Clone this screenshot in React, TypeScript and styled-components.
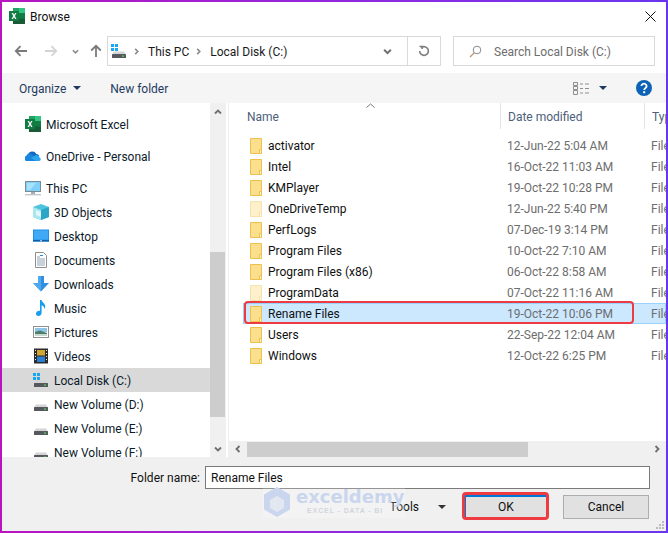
import styled, { createGlobalStyle } from "styled-components";

const GlobalStyle = createGlobalStyle`
  html, body {
    margin: 0;
    padding: 0;
    background: #fff;
  }
  * {
    box-sizing: border-box;
  }
`;

const Frame = styled.div`
  position: relative;
  width: 668px;
  height: 533px;
  padding: 2px;
  background: linear-gradient(90deg, #b815c0 0%, #8a2be2 60%, #6a35f0 100%);
  font-family: Roboto, "Open Sans", sans-serif;
  font-size: 12px;
  color: #101010;
  overflow: hidden;
`;

const Dialog = styled.div`
  width: 100%;
  height: 100%;
  display: flex;
  flex-direction: column;
  background: #fff;
  overflow: hidden;
`;

const Label = styled.span`
  padding-top: 2px;
`;

const TitleBar = styled.div`
  height: 34px;
  flex: none;
  display: flex;
  align-items: center;
  padding: 0 10px 6px 7px;
  gap: 5px;
`;

const TitleText = styled(Label)`
  flex: 1;
`;

const NavBar = styled.div`
  height: 37px;
  flex: none;
  display: flex;
  align-items: flex-start;
  padding-right: 11px;
`;

const NavButtons = styled.div`
  width: 105px;
  height: 30px;
  flex: none;
  display: flex;
  align-items: center;
  padding-left: 12px;
`;

const AddressBox = styled.div`
  width: 334px;
  height: 30px;
  flex: none;
  display: flex;
  align-items: center;
  border: 1px solid #d9d9d9;
  padding-left: 3px;
`;

const Crumb = styled(Label)`
  color: #1a1a1a;
`;

const CrumbSep = styled.span`
  margin: 0 8px 0 6px;
  display: flex;
`;

const AddressEnd = styled.div`
  width: 33px;
  height: 100%;
  flex: none;
  display: flex;
  align-items: center;
  justify-content: center;
  border-left: 1px solid #d9d9d9;
`;

const AddressDrop = styled.span`
  margin-left: auto;
  margin-right: 15px;
  display: flex;
`;

const SearchBox = styled.div`
  margin-left: 12px;
  width: 202px;
  height: 30px;
  display: flex;
  align-items: center;
  gap: 12px;
  border: 1px solid #d9d9d9;
  padding-left: 15px;
  color: #6d6d6d;
`;

const ToolBar = styled.div`
  height: 30px;
  flex: none;
  display: flex;
  align-items: center;
  background: #f5f5f5;
  padding: 0 14px 0 17px;
  color: #1f3a5f;
`;

const ToolLabel = styled(Label)<{ $gap: number }>`
  margin-right: ${(p) => p.$gap}px;
`;

const Caret = styled.span<{ $color?: string }>`
  display: inline-block;
  width: 0;
  height: 0;
  border-left: 4px solid transparent;
  border-right: 4px solid transparent;
  border-top: 4px solid ${(p) => p.$color ?? "#1f3a5f"};
`;

const ToolRight = styled.div`
  margin-left: auto;
  display: flex;
  align-items: center;
`;

const Main = styled.div`
  height: 354px;
  flex: none;
  display: flex;
  overflow: hidden;
`;

const Sidebar = styled.div`
  width: 208px;
  flex: none;
  padding-top: 9px;
  overflow: hidden;
`;

const NavRow = styled.div<{ $indent?: boolean; $active?: boolean; $gapTop?: boolean }>`
  height: 24px;
  display: flex;
  align-items: center;
  gap: 5px;
  padding-left: ${(p) => (p.$indent ? 31 : 23)}px;
  margin-top: ${(p) => (p.$gapTop ? 8 : 0)}px;
  background: ${(p) => (p.$active ? "#d9d9d9" : "transparent")};
  color: #0c1a2a;
`;

const IconSlot = styled.span`
  width: 16px;
  height: 16px;
  flex: none;
  display: flex;
`;

const VScroll = styled.div`
  width: 16px;
  flex: none;
  display: flex;
  flex-direction: column;
  background: #f0f0f0;
`;

const ScrollEnd = styled.div<{ $bottom?: boolean }>`
  height: ${(p) => (p.$bottom ? 16 : 17)}px;
  margin-top: ${(p) => (p.$bottom ? "auto" : "0")};
  flex: none;
  display: flex;
  align-items: center;
  justify-content: center;
`;

const VThumb = styled.div`
  margin-top: 132px;
  height: 165px;
  width: 15px;
  background: #cdcdcd;
`;

const Splitter = styled.div`
  width: 3px;
  flex: none;
  background: #fff;
  border-right: 1px solid #f0f0f0;
`;

const FilePane = styled.div`
  flex: 1;
  min-width: 0;
  display: flex;
  flex-direction: column;
`;

const FileArea = styled.div`
  flex: 1;
  min-height: 0;
  overflow: hidden;
`;

const HeaderRow = styled.div`
  height: 26px;
  display: flex;
  align-items: center;
  color: #4c607a;
`;

const HeaderCell = styled.div<{ $width: number; $pad: number }>`
  position: relative;
  width: ${(p) => p.$width}px;
  height: 100%;
  flex: none;
  display: flex;
  align-items: center;
  padding-left: ${(p) => p.$pad}px;
  border-right: 1px solid #e5e5e5;
`;

const SortMark = styled.svg`
  position: absolute;
  top: 0;
  left: 137px;
`;

const FileRows = styled.div`
  padding: 6px 0 0 14px;
`;

const FileRow = styled.div<{ $selected?: boolean }>`
  height: 21px;
  display: flex;
  align-items: center;
  background: ${(p) => (p.$selected ? "#cce8ff" : "transparent")};
  box-shadow: ${(p) => (p.$selected ? "inset 0 0 0 1px #99d1ff" : "none")};
`;

const FileName = styled.div`
  width: 264px;
  flex: none;
  display: flex;
  align-items: center;
  gap: 4px;
  padding-left: 6px;
`;

const FileDate = styled.div`
  width: 144px;
  flex: none;
  color: #6d6d6d;
`;

const FileType = styled.div`
  color: #6d6d6d;
  white-space: nowrap;
`;

const HScroll = styled.div`
  height: 16px;
  flex: none;
  display: flex;
  align-items: center;
  background: #f0f0f0;
`;

const HEnd = styled.div<{ $end?: boolean }>`
  width: 18px;
  height: 100%;
  margin-left: ${(p) => (p.$end ? "auto" : "0")};
  flex: none;
  display: flex;
  align-items: center;
  justify-content: center;
`;

const HThumb = styled.div`
  width: 281px;
  height: 15px;
  background: #cdcdcd;
`;

const Footer = styled.div`
  flex: 1;
  min-height: 0;
  background: #f0f0f0;
  padding: 9px 16px 0 0;
  position: relative;
`;

const NameLine = styled.div`
  display: flex;
  align-items: center;
  justify-content: flex-end;
  gap: 5px;
`;

const NameInput = styled.div`
  width: 445px;
  height: 23px;
  display: flex;
  align-items: center;
  background: #fff;
  border: 1px solid #7a7a7a;
  padding-left: 5px;
`;

const ActionLine = styled.div`
  margin-top: 6px;
  padding-right: 1px;
  display: flex;
  align-items: center;
  justify-content: flex-end;
`;

const ToolsLabel = styled.div`
  display: flex;
  align-items: center;
  gap: 19px;
  margin-right: 18px;
`;

const ActionButton = styled.div<{ $primary?: boolean }>`
  width: ${(p) => (p.$primary ? 84 : 86)}px;
  height: 24px;
  margin-left: ${(p) => (p.$primary ? 0 : 15)}px;
  display: flex;
  align-items: center;
  justify-content: center;
  background: #e1e1e1;
  border: ${(p) => (p.$primary ? "2px solid #0078d7" : "1px solid #adadad")};
`;

const Grip = styled.svg`
  position: absolute;
  right: 1px;
  bottom: 1px;
`;

const Highlight = styled.div<{ $x: number; $y: number; $w: number; $h: number; $thick?: boolean }>`
  position: absolute;
  left: ${(p) => p.$x}px;
  top: ${(p) => p.$y}px;
  width: ${(p) => p.$w}px;
  height: ${(p) => p.$h}px;
  border: ${(p) => (p.$thick ? 3 : 2)}px solid #ee3b42;
  border-radius: 4px;
`;

const Watermark = styled.div`
  position: absolute;
  left: 263px;
  top: 487px;
  width: 142px;
  height: 31px;
  display: flex;
  gap: 5px;
  background: rgba(255, 255, 255, 0.2);
  pointer-events: none;
`;

const MarkText = styled.div`
  display: flex;
  flex-direction: column;
  line-height: 1;
`;

const MarkName = styled.span`
  font-family: "DejaVu Sans", sans-serif;
  font-weight: 700;
  font-size: 18px;
  line-height: 20px;
  color: #c9d6ee;
`;

const MarkTag = styled.span`
  font-family: "Liberation Sans", sans-serif;
  font-weight: 700;
  font-size: 7px;
  letter-spacing: 0.9px;
  color: #d2d6dc;
  margin-left: 11px;
  white-space: nowrap;
`;

const ExcelIcon = () => (
  <svg width="16" height="16" viewBox="0 0 16 16">
    <rect x="4" y="0" width="12" height="16" fill="#185c37" />
    <rect x="10" y="0" width="6" height="5.3" fill="#33c481" />
    <rect x="4" y="0" width="6" height="5.3" fill="#21a366" />
    <rect x="10" y="5.3" width="6" height="5.3" fill="#107c41" />
    <rect x="0" y="3" width="10" height="10" fill="#107c41" />
    <path d="M2.6 5h1.5l1 1.9L6.1 5h1.4L5.9 8l1.6 3H6.1L5 9.1 4 11H2.6l1.6-3z" fill="#fff" />
  </svg>
);

const CloudIcon = () => (
  <svg width="16" height="16" viewBox="0 0 16 16">
    <path d="M3 7.5a4.4 4.4 0 0 1 8.3-1.6 3.4 3.4 0 0 1 3 1.9L6 11z" fill="#0f6cc4" />
    <path d="M1.6 13a2.6 2.6 0 0 1-.3-5.1A3 3 0 0 1 6 6.3l7 4.2L11.5 13z" fill="#1a86dc" />
    <path d="M11 13h3.2a1.8 1.8 0 0 0 .3-3.5 3 3 0 0 0-4.8-1.8L6 10z" fill="#2aa5ee" />
  </svg>
);

const MonitorIcon = () => (
  <svg width="16" height="16" viewBox="0 0 16 16">
    <rect x="0.5" y="1.5" width="15" height="10" fill="#7fd0fb" stroke="#7c8a96" />
    <path d="M2 3h9l-6 7H2z" fill="#a9e2fd" />
    <rect x="6" y="12" width="4" height="2" fill="#a6adb4" />
    <rect x="0" y="14" width="16" height="1.4" fill="#c3c8cd" />
  </svg>
);

const CubeIcon = () => (
  <svg width="16" height="16" viewBox="0 0 16 16">
    <path d="M8 0l8 3v10l-8 3-8-3V3z" fill="#4fc3dc" />
    <path d="M0 3l8 3v10l-8-3z" fill="#a8e6f1" />
    <path d="M8 6l8-3v10l-8 3z" fill="#2ba6c6" />
    <path d="M3 6l5 2v5l-5-2z" fill="#dff7fb" />
  </svg>
);

const DesktopIcon = () => (
  <svg width="16" height="16" viewBox="0 0 16 16">
    <rect x="0" y="1.5" width="16" height="12" fill="#1e90e6" />
    <rect x="1" y="2.5" width="14" height="9" fill="#3fa9f5" />
    <rect x="0" y="12" width="16" height="1.5" fill="#0a5fa8" />
    <rect x="7" y="12.3" width="2" height="0.9" fill="#cfe8fb" />
  </svg>
);

const DocIcon = () => (
  <svg width="16" height="16" viewBox="0 0 16 16">
    <path d="M2.5.5h8l3 3v12h-11z" fill="#fff" stroke="#8f8f8f" />
    <path d="M4 5h3M4 7h8M4 9h8M4 11h8M4 13h8" stroke="#8fa3b5" />
    <path d="M7 3.5h3" stroke="#2a8ad8" />
  </svg>
);

const DownloadIcon = () => (
  <svg width="16" height="16" viewBox="0 0 16 16">
    <path d="M5 0h6v7h5l-8 8.5L0 7h5z" fill="#2f8fe0" />
    <path d="M5 0h3v15.5L0 7h5z" fill="#4fa9ef" />
  </svg>
);

const MusicIcon = () => (
  <svg width="16" height="16" viewBox="0 0 16 16">
    <path d="M7 0h1.600c.3 2.600 3.600 3 3.600 6.400 0 1-.3 1.800-.8 2.600.1-2.200-1.400-3.400-2.800-3.800V13c0 1.800-1.600 3-3.300 3S3 15 3 13.600c0-1.600 1.600-2.800 3.200-2.800.3 0 .6 0 .8.1z" fill="#1a9cf0" />
  </svg>
);

const PictureIcon = () => (
  <svg width="16" height="16" viewBox="0 0 16 16">
    <rect x="0.5" y="2.5" width="15" height="11" fill="#fff" stroke="#8f8f8f" />
    <rect x="2" y="4" width="12" height="4" fill="#8fc4e8" />
    <path d="M2 8l5-1.500L14 9v3H2z" fill="#4b7f6d" />
    <rect x="2" y="10" width="12" height="2" fill="#c8d6d0" />
  </svg>
);

const VideoIcon = () => (
  <svg width="16" height="16" viewBox="0 0 16 16">
    <rect x="1" y="0.5" width="14" height="15" fill="#2b2b2b" />
    <rect x="4" y="2" width="8" height="5.5" fill="#d0a533" />
    <rect x="4" y="8.5" width="8" height="5.5" fill="#2a7fd0" />
    <path d="M2 2h1v1H2zM2 5h1v1H2zM2 8h1v1H2zM2 11h1v1H2zM13 2h1v1h-1zM13 5h1v1h-1zM13 8h1v1h-1zM13 11h1v1h-1z" fill="#e8e8e8" />
  </svg>
);

const DriveIcon = ({ flag }: { flag?: boolean }) => (
  <svg width="16" height="16" viewBox="0 0 16 16">
    {flag && <path d="M0 1h3v3H0zM4 1h3v3H4zM0 5h3v3H0zM4 5h3v3H4z" fill="#18a8f1" />}
    <path d="M3 8.500h10l2 3H1z" fill="#d4d4d4" />
    <rect x="1" y="11" width="14" height="4" rx="0.5" fill="#55595e" />
    <rect x="11" y="12.5" width="2" height="1.2" fill="#4ee04e" />
  </svg>
);

const FolderIcon = ({ faded }: { faded?: boolean }) => (
  <svg width="15" height="16" viewBox="0 0 15 16" style={{ opacity: faded ? 0.45 : 1 }}>
    <path d="M1.500.5h11v15h-11z" fill="#fbdf8c" stroke="#ecc14f" />
    <path d="M10.500 11.500h2v4h-2z" fill="#fff4c8" stroke="#ecc14f" />
  </svg>
);

const Arrow = ({ color, flip }: { color: string; flip?: boolean }) => (
  <svg width="14" height="12" viewBox="0 0 14 12" style={{ transform: flip ? "scaleX(-1)" : undefined }}>
    <path d="M13 6H2M6.500 1.200L1.800 6l4.700 4.800" fill="none" stroke={color} strokeWidth="1.8" />
  </svg>
);

const Chevron = ({ rotate = 0, size = 8, color = "#6f6f6f", width = 1.8 }: { rotate?: number; size?: number; color?: string; width?: number }) => (
  <svg width={size} height={size} viewBox="0 0 8 8" style={{ transform: `rotate(${rotate}deg)` }}>
    <path d="M1 2.500L4 5.500l3-3" fill="none" stroke={color} strokeWidth={width} />
  </svg>
);

const navItems = [
  { label: "Microsoft Excel", icon: <ExcelIcon /> },
  { label: "OneDrive - Personal", icon: <CloudIcon />, gapTop: true },
  { label: "This PC", icon: <MonitorIcon />, gapTop: true },
  { label: "3D Objects", icon: <CubeIcon />, indent: true },
  { label: "Desktop", icon: <DesktopIcon />, indent: true },
  { label: "Documents", icon: <DocIcon />, indent: true },
  { label: "Downloads", icon: <DownloadIcon />, indent: true },
  { label: "Music", icon: <MusicIcon />, indent: true },
  { label: "Pictures", icon: <PictureIcon />, indent: true },
  { label: "Videos", icon: <VideoIcon />, indent: true },
  { label: "Local Disk (C:)", icon: <DriveIcon flag />, indent: true, active: true },
  { label: "New Volume (D:)", icon: <DriveIcon />, indent: true },
  { label: "New Volume (E:)", icon: <DriveIcon />, indent: true },
  { label: "New Volume (F:)", icon: <DriveIcon />, indent: true },
];

const files = [
  { name: "activator", date: "12-Jun-22 5:04 AM" },
  { name: "Intel", date: "16-Oct-22 11:03 AM" },
  { name: "KMPlayer", date: "19-Oct-22 10:28 PM" },
  { name: "OneDriveTemp", date: "12-Jun-22 5:40 PM", faded: true },
  { name: "PerfLogs", date: "07-Dec-19 3:14 PM" },
  { name: "Program Files", date: "10-Oct-22 7:10 AM" },
  { name: "Program Files (x86)", date: "06-Oct-22 8:58 AM" },
  { name: "ProgramData", date: "07-Oct-22 11:16 AM", faded: true },
  { name: "Rename Files", date: "19-Oct-22 10:06 PM", selected: true },
  { name: "Users", date: "22-Sep-22 12:04 AM" },
  { name: "Windows", date: "12-Oct-22 6:25 PM" },
];

export default function App() {
  return (
    <Frame>
      <GlobalStyle />
      <Dialog>
        <TitleBar>
          <ExcelIcon />
          <TitleText>Browse</TitleText>
          <svg width="11" height="11" viewBox="0 0 11 11">
            <path d="M.5.5l10 10M10.500.5l-10 10" stroke="#111" strokeWidth="1" />
          </svg>
        </TitleBar>

        <NavBar>
          <NavButtons>
            <Arrow color="#7a7a7a" />
            <span style={{ width: 16 }} />
            <Arrow color="#d4d4d4" flip />
            <span style={{ width: 14 }} />
            <Chevron size={7} color="#8a8a8a" />
            <span style={{ width: 11 }} />
            <svg width="12" height="14" viewBox="0 0 12 14">
              <path d="M6 13V2M1.200 6.500L6 1.800l4.800 4.700" fill="none" stroke="#7a7a7a" strokeWidth="1.8" />
            </svg>
          </NavButtons>
          <AddressBox>
            <IconSlot>
              <DriveIcon flag />
            </IconSlot>
            <CrumbSep>
              <Chevron rotate={-90} size={7} color="#8a8a8a" />
            </CrumbSep>
            <Crumb>This PC</Crumb>
            <CrumbSep>
              <Chevron rotate={-90} size={7} color="#8a8a8a" />
            </CrumbSep>
            <Crumb>Local Disk (C:)</Crumb>
            <AddressDrop>
              <Chevron size={9} color="#6f6f6f" />
            </AddressDrop>
            <AddressEnd>
              <svg width="12" height="12" viewBox="0 0 12 12">
                <path d="M3.200 2.600A4.400 4.400 0 1 1 1.600 6M1.500 1.500h2.600v2.600" fill="none" stroke="#7c7c7c" strokeWidth="1.6" />
              </svg>
            </AddressEnd>
          </AddressBox>
          <SearchBox>
            <svg width="13" height="13" viewBox="0 0 13 13">
              <circle cx="8" cy="5" r="3.8" fill="none" stroke="#8a8a8a" />
              <path d="M5.200 7.800L1 12" stroke="#c08a60" strokeWidth="1.1" />
            </svg>
            <Label>Search Local Disk (C:)</Label>
          </SearchBox>
        </NavBar>

        <ToolBar>
          <ToolLabel $gap={7}>Organize</ToolLabel>
          <Caret />
          <span style={{ width: 29 }} />
          <ToolLabel $gap={0}>New folder</ToolLabel>
          <ToolRight>
            <svg width="17" height="13" viewBox="0 0 17 13">
              <path d="M.5.5h4v3h-4zM.5 4.500h4v3h-4zM.5 8.500h4v4h-4z" fill="none" stroke="#8f8f8f" />
              <path d="M7 2h3M12 2h4M7 6.500h3M12 6.500h4M7 11h3M12 11h4" stroke="#8f8f8f" />
            </svg>
            <span style={{ width: 9 }} />
            <Caret />
            <span style={{ width: 29 }} />
            <svg width="16" height="16" viewBox="0 0 16 16">
              <circle cx="8" cy="8" r="8" fill="#0c63b5" />
              <path d="M5.400 6a2.600 2.400 0 1 1 4 2.100c-.8.6-1.200 1-1.200 2" fill="none" stroke="#fff" strokeWidth="1.8" />
              <rect x="7.2" y="11.200" width="2" height="2" fill="#fff" />
            </svg>
          </ToolRight>
        </ToolBar>

        <Main>
          <Sidebar>
            {navItems.map((item) => (
              <NavRow key={item.label} $indent={item.indent} $active={item.active} $gapTop={item.gapTop}>
                <IconSlot>{item.icon}</IconSlot>
                <Label>{item.label}</Label>
              </NavRow>
            ))}
          </Sidebar>
          <VScroll>
            <ScrollEnd>
              <Chevron rotate={180} />
            </ScrollEnd>
            <VThumb />
            <ScrollEnd $bottom>
              <Chevron />
            </ScrollEnd>
          </VScroll>
          <Splitter />
          <FilePane>
            <FileArea>
              <HeaderRow>
                <HeaderCell $width={272} $pad={18}>
                  <Label>Name</Label>
                  <SortMark width="9" height="5" viewBox="0 0 9 5">
                    <path d="M.5 4.500l4-3.500 4 3.500" fill="none" stroke="#777" />
                  </SortMark>
                </HeaderCell>
                <HeaderCell $width={144} $pad={7}>
                  <Label>Date modified</Label>
                </HeaderCell>
                <HeaderCell $width={40} $pad={7}>
                  <Label>Type</Label>
                </HeaderCell>
              </HeaderRow>
              <FileRows>
                {files.map((file) => (
                  <FileRow key={file.name} $selected={file.selected}>
                    <FileName>
                      <FolderIcon faded={file.faded} />
                      {file.name}
                    </FileName>
                    <FileDate>{file.date}</FileDate>
                    <FileType>File folder</FileType>
                  </FileRow>
                ))}
              </FileRows>
            </FileArea>
            <HScroll>
              <HEnd>
                <Chevron rotate={90} />
              </HEnd>
              <HThumb />
              <HEnd $end>
                <Chevron rotate={-90} />
              </HEnd>
            </HScroll>
          </FilePane>
        </Main>

        <Footer>
          <NameLine>
            Folder name:
            <NameInput>Rename Files</NameInput>
          </NameLine>
          <ActionLine>
            <ToolsLabel>
              Tools
              <Caret $color="#333" />
            </ToolsLabel>
            <ActionButton $primary>OK</ActionButton>
            <ActionButton>Cancel</ActionButton>
          </ActionLine>
          <Grip width="10" height="10" viewBox="0 0 10 10">
            <path d="M7 1h2v2H7zM4 4h2v2H4zM7 4h2v2H7zM1 7h2v2H1zM4 7h2v2H4zM7 7h2v2H7z" fill="#bdbdbd" />
          </Grip>
        </Footer>
      </Dialog>

      <Watermark>
        <svg width="28" height="30" viewBox="0 0 28 30" style={{ flex: "none" }}>
          <path d="M14 0l13 7.500v15L14 30 1 22.500V7.500z" fill="#c9d6ee" />
          <path d="M14 9l7 4v8l-7 4-7-4v-8z" fill="#e3e8f0" />
        </svg>
        <MarkText>
          <MarkName>exceldemy</MarkName>
          <MarkTag>EXCEL - DATA - BI</MarkTag>
        </MarkText>
      </Watermark>
      <Highlight $x={244} $y={301} $w={390} $h={23} />
      <Highlight $x={462} $y={492} $w={87} $h={28} $thick />
    </Frame>
  );
}
